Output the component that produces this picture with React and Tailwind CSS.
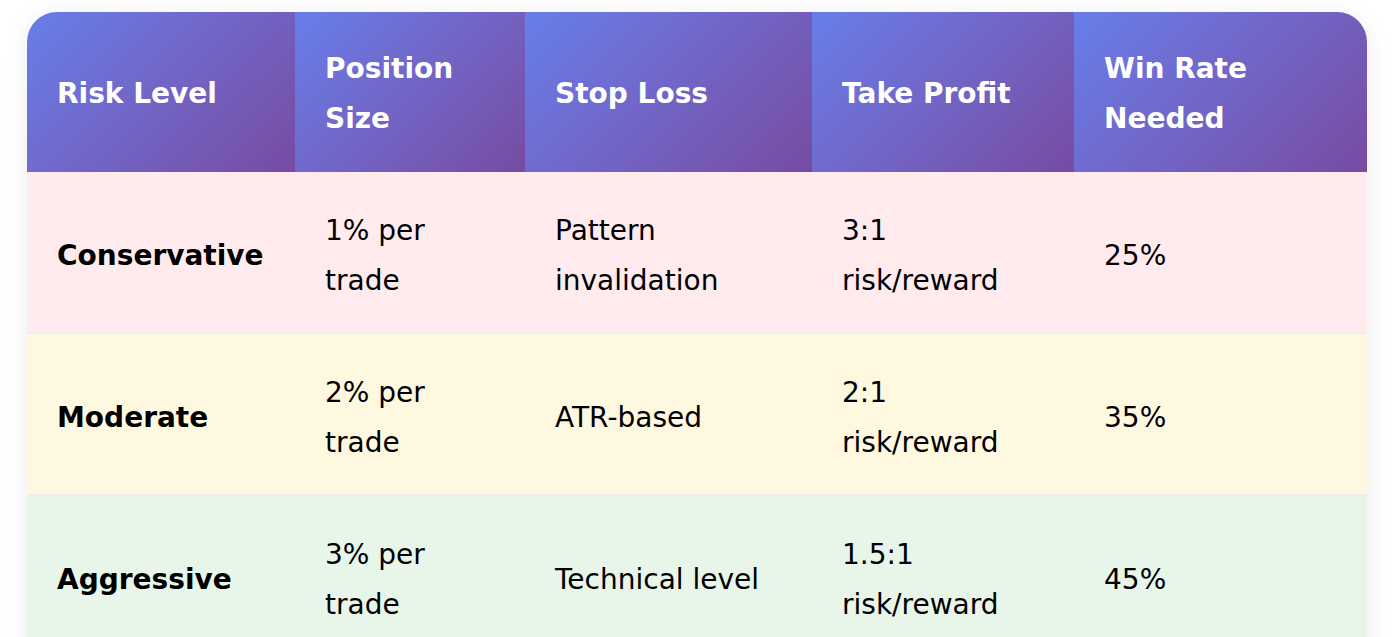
import React from "react";

const headers = [
    { label: "Risk Level", w: "w-[268px]" },
    { label: "Position Size", w: "w-[230px]" },
    { label: "Stop Loss", w: "w-[287px]" },
    { label: "Take Profit", w: "w-[262px]" },
    { label: "Win Rate Needed", w: "w-[293px]" },
];

const rows = [
    { level: "Conservative", size: "1% per trade", stop: "Pattern invalidation", take: "3:1 risk/reward", win: "25%", bg: "bg-[#ffebee]" },
    { level: "Moderate", size: "2% per trade", stop: "ATR-based", take: "2:1 risk/reward", win: "35%", bg: "bg-[#fff8e1]" },
    { level: "Aggressive", size: "3% per trade", stop: "Technical level", take: "1.5:1 risk/reward", win: "45%", bg: "bg-[#e8f5e9]" },
];

export default function App() {
    return (
        <div className="min-h-screen bg-white pt-[12px] font-['DejaVu_Sans',sans-serif] text-[28px] leading-[50px]">
            <div className="ml-[27px] w-[1340px] rounded-t-[30px] overflow-hidden shadow-[0_4px_24px_rgba(0,0,0,0.08)]">
                <table className="w-full table-fixed border-collapse">
                    <thead>
                        <tr>
                            {headers.map((h) => (
                                <th
                                    key={h.label}
                                    className={`${h.w} px-[30px] pt-[32px] pb-[28px] text-left font-bold text-white bg-linear-135 from-[#667eea] to-[#764ba2]`}
                                >
                                    {h.label}
                                </th>
                            ))}
                        </tr>
                    </thead>
                    <tbody>
                        {rows.map((r) => (
                            <tr key={r.level} className={`${r.bg} border-b-2 border-[#eeeeee] text-black`}>
                                <td className="px-[30px] pt-[34px] pb-[26px] font-bold">{r.level}</td>
                                <td className="px-[30px] pt-[34px] pb-[26px]">{r.size}</td>
                                <td className="px-[30px] pt-[34px] pb-[26px]">{r.stop}</td>
                                <td className="px-[30px] pt-[34px] pb-[26px]">{r.take}</td>
                                <td className="px-[30px] pt-[34px] pb-[26px]">{r.win}</td>
                            </tr>
                        ))}
                    </tbody>
                </table>
            </div>
        </div>
    );
}
